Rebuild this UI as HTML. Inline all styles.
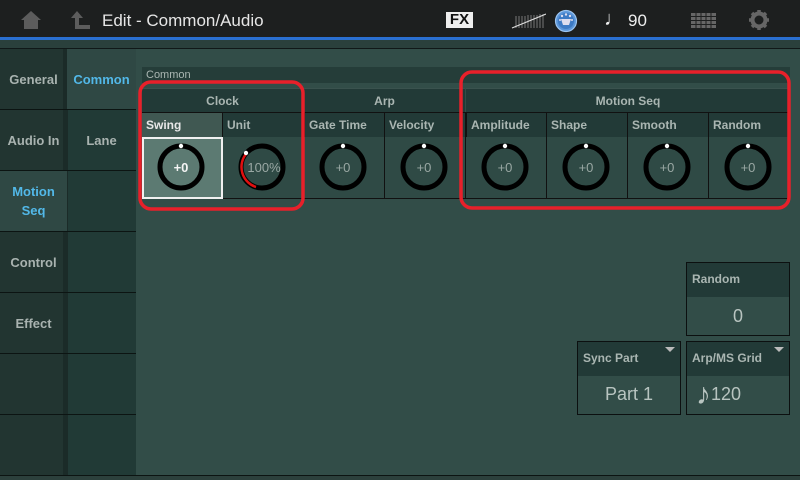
<!DOCTYPE html>
<html><head><style>
*{margin:0;padding:0;box-sizing:border-box}
body{width:800px;height:480px;background:#324d48;font-family:"Liberation Sans","DejaVu Sans",sans-serif;position:relative;overflow:hidden;color:#b8c4c0}
.a{position:absolute}
.top{left:0;top:0;width:800px;height:37px;background:#1d1f1f}
.blue{left:0;top:37px;width:800px;height:3px;background:#2a6fd0}
.dk{left:0;top:40px;width:800px;height:9px;background:#2a403c;border-bottom:1px solid #101818}
.c1{left:0;top:49px;width:67px;height:426px;background:#223531}
.c2{left:67px;top:49px;width:69px;height:426px;background:#213a36}
.tab{position:absolute;left:0;width:67px;height:61px;border-bottom:1px solid #0c1412;display:flex;align-items:center;justify-content:center;text-align:center;font-size:13px;font-weight:bold;color:#a9b3b0;line-height:19px}
.tab2{position:absolute;left:67px;width:69px;height:61px;border-bottom:1px solid #0c1412;display:flex;align-items:center;justify-content:center;font-size:13px;font-weight:bold;color:#a9b3b0}
.sel{color:#52b8e8}
.hd{background:#223a37;font-size:12px;font-weight:bold;color:#aab6b2}
.cell{position:absolute;width:81px;border-right:1px solid #111;}
.lab{position:absolute;left:4px;top:5px;font-size:12px;font-weight:bold;color:#aab6b2}
.box{position:absolute;border:1px solid #0c1010}
</style></head><body>
<div class="a top"></div>
<svg class="a" style="left:20px;top:10px" width="22" height="20"><path d="M1 10 L11 1 L21 10 L18 10 L18 19 L4 19 L4 10Z" fill="#5c5c5c"/></svg>
<svg class="a" style="left:70px;top:9px" width="22" height="22"><path d="M7 2 L1 9 L5 9 L5 20 L20 20 L20 16 L9 16 L9 9 L13 9Z" fill="#5c5c5c"/></svg>
<div class="a" style="left:102px;top:11px;font-size:17px;color:#e6e6e6">Edit - Common/Audio</div>
<div class="a" style="left:446px;top:12px;width:27px;height:16px;background:#eee;color:#111;font-weight:bold;font-size:15px;line-height:16px;text-align:center">FX</div>
<svg class="a" style="left:511px;top:12px" width="35" height="17"><g stroke="#777" stroke-width="1">
<path d="M5 16V4M8 16V4M11 16V4M14 16V4M17 16V3M20 16V3M23 16V3M26 16V3M29 16V2M32 16V2"/></g><path d="M1 16L35 2" stroke="#ddd" stroke-width="1.2"/></svg>
<svg class="a" style="left:554px;top:9px" width="24" height="24"><circle cx="12" cy="12" r="10.5" fill="#5a95d8" stroke="#9cc4f0" stroke-width="1.2"/><circle cx="12" cy="12" r="8" fill="#3d7ac4"/><path d="M7 10h10l-2 6h-6z" fill="#dde"/><g fill="#dde"><circle cx="8" cy="7" r="1.2"/><circle cx="12" cy="5.5" r="1.2"/><circle cx="16" cy="7" r="1.2"/><circle cx="6" cy="11" r="1"/><circle cx="18" cy="11" r="1"/></g></svg>
<div class="a" style="left:604px;top:8px;font-size:20px;color:#eee">&#9833;</div>
<div class="a" style="left:628px;top:11px;font-size:17px;color:#eee">90</div>
<svg class="a" style="left:691px;top:13px" width="25" height="15"><g fill="#666"><rect x="0" y="0" width="25" height="3"/><rect x="0" y="4" width="25" height="3"/><rect x="0" y="8" width="25" height="3"/><rect x="0" y="12" width="25" height="3"/></g><g stroke="#1d1f1f"><path d="M5 0v15M10 0v15M15 0v15M20 0v15"/></g></svg>
<svg class="a" style="left:749px;top:10px" width="20" height="20"><circle cx="10" cy="10" r="6.5" fill="none" stroke="#666" stroke-width="4"/><g stroke="#666" stroke-width="3.5"><path d="M10 0v4M10 16v4M0 10h4M16 10h4M3 3l3 3M14 14l3 3M17 3l-3 3M3 17l3-3"/></g></svg>
<div class="a blue"></div>
<div class="a dk"></div>
<div class="a c1"></div><div class="a c2"></div>
<div class="a" style="left:63px;top:49px;width:5px;height:426px;background:#1b2b28"></div>
<div class="tab" style="top:49px">General</div>
<div class="tab" style="top:110px">Audio In</div>
<div class="tab sel" style="top:171px;background:#2f4844">Motion<br>Seq</div>
<div class="tab" style="top:232px">Control</div>
<div class="tab" style="top:293px">Effect</div>
<div class="tab" style="top:354px"></div>
<div class="tab2 sel" style="top:49px;background:#2f4844">Common</div>
<div class="tab2" style="top:110px">Lane</div>
<div class="tab2" style="top:171px"></div>
<div class="tab2" style="top:232px"></div>
<div class="tab2" style="top:293px"></div>
<div class="tab2" style="top:354px"></div>
<div class="a" style="left:0;top:475px;width:800px;height:1px;background:#0c1412"></div>
<div class="a" style="left:0;top:476px;width:800px;height:4px;background:#2c403c"></div>

<div class="a hd" style="left:142px;top:67px;width:648px;height:16px;font-weight:normal;font-size:11px;padding-left:4px;line-height:16px;background:#253d39">Common</div>
<div class="a hd" style="left:142px;top:88px;width:161px;height:25px;text-align:center;line-height:25px;border-top:1px solid #3a524e">Clock</div>
<div class="a hd" style="left:304px;top:88px;width:161px;height:25px;text-align:center;line-height:25px;border-top:1px solid #3a524e">Arp</div>
<div class="a hd" style="left:466px;top:88px;width:324px;height:25px;text-align:center;line-height:25px;border-top:1px solid #3a524e">Motion Seq</div>

<div class="cell" style="left:142px;top:112px;height:26px;background:#405852;border-top:1px solid #111"><span class="lab" style="color:#e8e8e8">Swing</span></div>
<div class="cell hd" style="left:223px;top:112px;height:26px;border-top:1px solid #111"><span class="lab">Unit</span></div>
<div class="cell hd" style="left:304px;top:112px;height:26px;border-top:1px solid #111;border-left:1px solid #111"><span class="lab">Gate Time</span></div>
<div class="cell hd" style="left:385px;top:112px;height:26px;border-top:1px solid #111"><span class="lab">Velocity</span></div>
<div class="cell hd" style="left:466px;top:112px;height:26px;border-top:1px solid #111;border-left:1px solid #111"><span class="lab">Amplitude</span></div>
<div class="cell hd" style="left:547px;top:112px;height:26px;border-top:1px solid #111"><span class="lab">Shape</span></div>
<div class="cell hd" style="left:628px;top:112px;height:26px;border-top:1px solid #111"><span class="lab">Smooth</span></div>
<div class="cell hd" style="left:709px;top:112px;height:26px;border-top:1px solid #111"><span class="lab">Random</span></div>
<div class="a" style="left:142px;top:137px;width:81px;height:62px;background:#5c7a72"></div>
<div class="a" style="left:223px;top:137px;width:567px;height:62px;background:#2f4a45;border-bottom:1px solid #111"></div>
<div class="a" style="left:142px;top:198px;width:648px;height:1px;background:#111"></div>
<svg class="a" style="left:142px;top:137px" width="648" height="62">
<g fill="none" stroke="#111" stroke-width="1"><path d="M161.5 0v62M242.5 0v62M323.5 0v62M404.5 0v62M485.5 0v62M566.5 0v62M647.5 0v62"/></g>
<g fill="none" stroke="#000" stroke-width="5">
<circle cx="39" cy="30" r="21"/><circle cx="120" cy="30" r="21"/><circle cx="201" cy="30" r="21"/><circle cx="282" cy="30" r="21"/><circle cx="363" cy="30" r="21"/><circle cx="444" cy="30" r="21"/><circle cx="525" cy="30" r="21"/><circle cx="606" cy="30" r="21"/></g>
<path d="M104 17 A21 21 0 0 0 114 50" fill="none" stroke="#e01010" stroke-width="2.5"/>
<g fill="#fff"><circle cx="39" cy="9" r="2.2"/><circle cx="104" cy="16" r="2.2"/><circle cx="201" cy="9" r="2.2"/><circle cx="282" cy="9" r="2.2"/><circle cx="363" cy="9" r="2.2"/><circle cx="444" cy="9" r="2.2"/><circle cx="525" cy="9" r="2.2"/><circle cx="606" cy="9" r="2.2"/></g>
<g font-family="Liberation Sans,sans-serif" font-size="13" text-anchor="middle" fill="#9aa8a4">
<text x="39" y="35" fill="#f4f4f4" font-weight="bold">+0</text><text x="122" y="35">100%</text><text x="201" y="35">+0</text><text x="282" y="35">+0</text><text x="363" y="35">+0</text><text x="444" y="35">+0</text><text x="525" y="35">+0</text><text x="606" y="35">+0</text></g>
</svg>
<div class="a" style="left:142px;top:137px;width:81px;height:62px;border:2px solid #f0f0f0;background:transparent"></div>

<svg class="a" style="left:0;top:0" width="800" height="480"><g fill="none" stroke="#e8202a" stroke-width="3.5">
<rect x="140" y="82" width="163" height="127" rx="11"/><rect x="461" y="72" width="328" height="136" rx="11"/></g></svg>

<div class="box" style="left:686px;top:262px;width:104px;height:74px"><div class="hd" style="height:34px;padding:9px 0 0 5px;font-size:12px">Random</div><div style="text-align:center;font-size:18px;padding-top:9px;color:#b8c4c0">0</div></div>
<div class="box" style="left:577px;top:341px;width:104px;height:74px"><div class="hd" style="height:34px;padding:9px 0 0 5px;font-size:12px">Sync Part</div><div style="text-align:center;font-size:18px;padding-top:8px;color:#b8c4c0">Part 1</div><div class="a" style="right:5px;top:5px;width:0;height:0;border-left:5px solid transparent;border-right:5px solid transparent;border-top:5px solid #bbb"></div></div>
<div class="box" style="left:686px;top:341px;width:104px;height:74px"><div class="hd" style="height:34px;padding:9px 0 0 5px;font-size:12px">Arp/MS Grid</div><div style="font-size:18px;padding:2px 0 0 9px;color:#b8c4c0"><span style="font-size:30px;vertical-align:-4px">&#9834;</span>120</div><div class="a" style="right:5px;top:5px;width:0;height:0;border-left:5px solid transparent;border-right:5px solid transparent;border-top:5px solid #bbb"></div></div>
</body></html>
